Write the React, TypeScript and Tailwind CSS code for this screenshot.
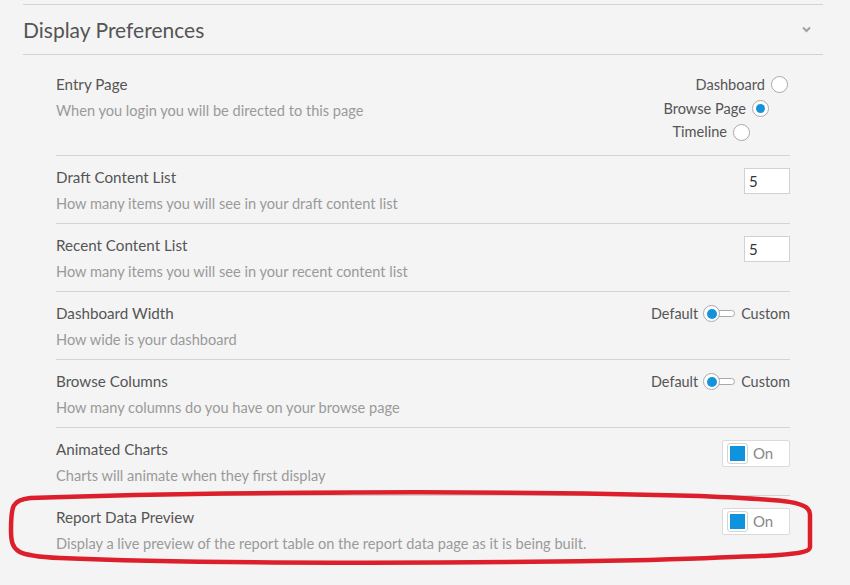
import React from 'react';

const font = { fontFamily: 'Lato, "Open Sans", sans-serif' };

const Radio: React.FC<{ label: string; checked?: boolean; className?: string }> = ({ label, checked, className }) => (
  <div className={`flex items-center justify-end gap-[6px] h-[23.7px] ${className ?? ''}`}>
    <span className="text-[14.6px] text-[#555]">{label}</span>
    <span className="w-[17px] h-[17px] rounded-full border border-[#a9a9a9] bg-white flex items-center justify-center">
      {checked && <span className="w-[9px] h-[9px] rounded-full bg-[#1593da]" />}
    </span>
  </div>
);

const Slide: React.FC = () => (
  <div className="flex items-center text-[14.4px] text-[#555]">
    <span>Default</span>
    <span className="relative ml-[5px] w-[32px] h-[17px] flex items-center">
      <span className="absolute left-[8px] right-0 h-[7px] rounded-full border border-[#a9a9a9] bg-white" />
      <span className="relative w-[17px] h-[17px] rounded-full border border-[#a9a9a9] bg-white flex items-center justify-center">
        <span className="w-[10px] h-[10px] rounded-full bg-[#1593da]" />
      </span>
    </span>
    <span className="ml-[6px]">Custom</span>
  </div>
);

const Check: React.FC = () => (
  <div className="w-[68px] h-[27px] bg-white border border-[#dadada] rounded-[2px] flex items-center pl-[4px] mt-[12px]">
    <span className="w-[21px] h-[21px] border border-[#d4d4d4] rounded-[3px] flex items-center justify-center">
      <span className="w-[15px] h-[15px] bg-[#0f93dc]" />
    </span>
    <span className="ml-[5px] text-[15px] text-[#888]">On</span>
  </div>
);

const NumberBox: React.FC = () => (
  <div className="w-[46px] h-[26px] bg-white border border-[#d2d2d2] mt-[12px] text-[15px] text-[#333] leading-[24px] pl-[4px]">5</div>
);

const rows: { title: string; desc: string; control: React.ReactNode }[] = [
  { title: 'Draft Content List', desc: 'How many items you will see in your draft content list', control: <NumberBox /> },
  { title: 'Recent Content List', desc: 'How many items you will see in your recent content list', control: <NumberBox /> },
  { title: 'Dashboard Width', desc: 'How wide is your dashboard', control: <div className="mt-[11px]"><Slide /></div> },
  { title: 'Browse Columns', desc: 'How many columns do you have on your browse page', control: <div className="mt-[11px]"><Slide /></div> },
  { title: 'Animated Charts', desc: 'Charts will animate when they first display', control: <Check /> },
  { title: 'Report Data Preview', desc: 'Display a live preview of the report table on the report data page as it is being built.', control: <Check /> },
];

export default function App() {
  return (
    <div className="relative w-[850px] h-[585px] bg-[#f4f4f4] overflow-hidden" style={font}>
      <div className="ml-[23px] mt-[4px] w-[800px] border-t border-[#d3d3d3]">
        <div className="h-[50px] flex items-center justify-between border-b border-[#d3d3d3]">
          <h2 className="text-[21px] text-[#555] leading-none">Display Preferences</h2>
          <svg width="9" height="7" viewBox="0 0 9 7" className="mr-[12px] mt-[0px]">
            <path d="M1 1.5 L4.5 5 L8 1.5" stroke="#a0a0a0" strokeWidth="2" fill="none" />
          </svg>
        </div>
        <div className="px-[33px]">
          <div className="h-[101px] flex justify-between items-start pt-[19px] border-b border-[#d3d3d3]">
            <div>
              <div className="text-[15.2px] text-[#555] leading-[20px]">Entry Page</div>
              <div className="text-[14.6px] text-[#9a9a9a] leading-[20px] mt-[7px]">When you login you will be directed to this page</div>
            </div>
            <div className="flex flex-col mt-[-1px]">
              <Radio label="Dashboard" className="mr-[2px]" />
              <Radio label="Browse Page" checked className="mr-[21px]" />
              <Radio label="Timeline" className="mr-[40px]" />
            </div>
          </div>
          {rows.map((r, i) => (
            <div
              key={r.title}
              className={`h-[68px] flex justify-between items-start ${i < rows.length - 1 ? 'border-b border-[#d3d3d3]' : ''}`}
            >
              <div className="pt-[11px]">
                <div className="text-[15.2px] text-[#555] leading-[20px]">{r.title}</div>
                <div className="text-[14.6px] text-[#9a9a9a] leading-[20px] mt-[7px]">{r.desc}</div>
              </div>
              {r.control}
            </div>
          ))}
        </div>
      </div>
      <svg className="absolute left-0 top-0 pointer-events-none" width="850" height="585" viewBox="0 0 850 585">
        <path
          d="M30 498 C200 492 500 490 700 496 C790 500 811 501 810 516 L810 547 C810 555 780 556 650 560 C450 564 200 564 60 558 C16 556 11 552 11 530 C11 506 12 500 30 498 Z"
          stroke="#dc1f2a"
          strokeWidth="4.5"
          fill="none"
        />
      </svg>
    </div>
  );
}
